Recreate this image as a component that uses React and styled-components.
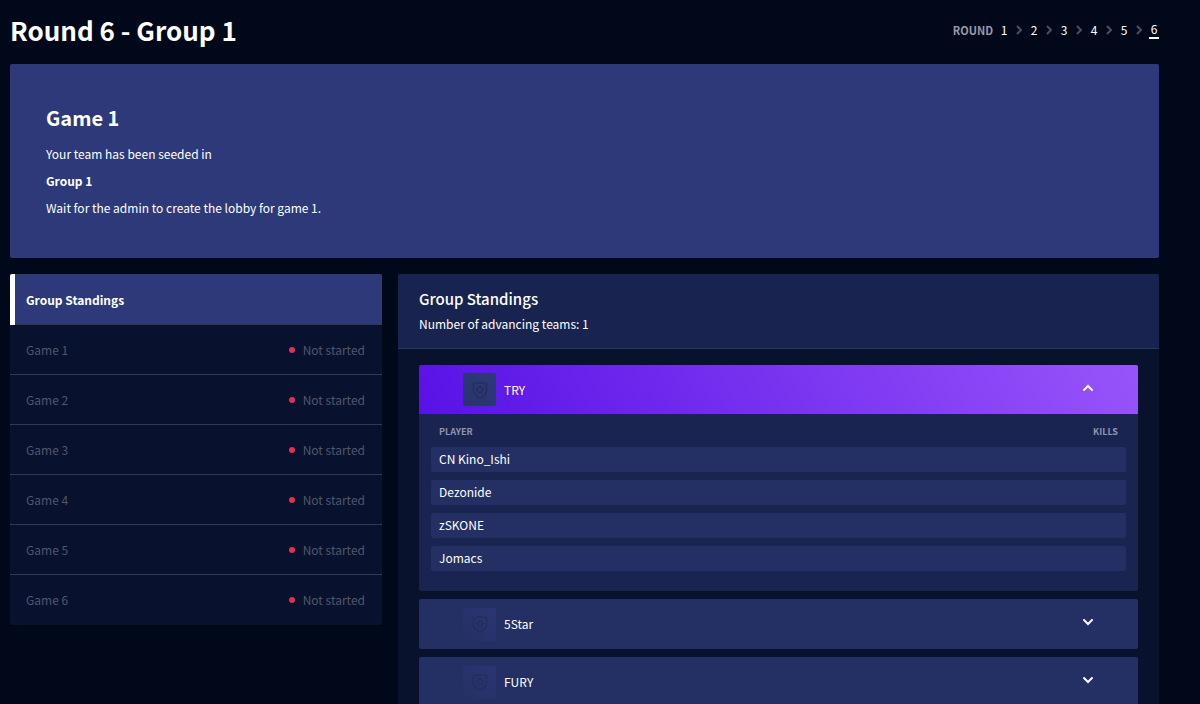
import React, { useState } from 'react'
import styled, { createGlobalStyle } from 'styled-components'


const GlobalStyle = createGlobalStyle`
    * {
        box-sizing: border-box;
    }
    html {
        scrollbar-width: none;
    }
    body {
        margin: 0;
        background: #000819;
        color: #fff;
        font-family: 'Noto Sans CJK SC', 'Noto Sans', sans-serif;
        font-size: 12px;
        line-height: 20px;
    }
    button {
        font: inherit;
        color: inherit;
        border: 0;
        cursor: pointer;
    }
`

const Page = styled.main`
    padding: 0 41px 16px 10px;
`

const Header = styled.header`
    display: flex;
    align-items: center;
    justify-content: space-between;
    height: 64px;
    padding-bottom: 4px;
`

const Title = styled.h1`
    margin: 0;
    font-size: 26px;
    font-weight: 700;
    line-height: 40px;
`

const Rounds = styled.nav`
    display: flex;
    align-items: center;
`

const RoundsLabel = styled.span`
    margin-right: 6px;
    font-size: 11px;
    font-weight: 700;
    color: #989ca8;
`

const RoundLink = styled.a`
    width: 10px;
    line-height: 16px;
    text-align: center;
    color: #fff;
    text-decoration: none;
    border-bottom: ${({ $current }) => ($current ? '2px solid #fff' : '0')};
`

const Separator = styled.svg`
    width: 8px;
    height: 10px;
    margin: 0 6px;
    fill: none;
    stroke: #4a5060;
    stroke-width: 2;
`

const Lobby = styled.section`
    min-height: 194px;
    padding: 36px;
    margin-bottom: 16px;
    background: #2d3978;
    border-radius: 2px;

    h2 {
        margin: 0 0 8px;
        font-size: 20px;
        font-weight: 700;
        line-height: 36px;
    }
    p {
        margin: 0 0 7px;
    }
    p:last-child {
        margin: 0;
    }
`

const Columns = styled.div`
    display: grid;
    grid-template-columns: 372fr 761fr;
    align-items: start;
    gap: 16px;
`

const Games = styled.nav`
    display: flex;
    flex-direction: column;
    background: #08112e;
    border-radius: 2px;
    overflow: hidden;
`

const GameTab = styled.button`
    display: flex;
    align-items: center;
    justify-content: space-between;
    height: 50px;
    padding: 0 17px 0 ${({ $active }) => ($active ? '11px' : '16px')};
    border-left: ${({ $active }) => ($active ? '5px solid #fff' : '0')};
    background: ${({ $active }) => ($active ? '#2d3978' : 'transparent')};
    color: ${({ $active }) => ($active ? '#fff' : '#50576c')};
    font-weight: ${({ $active }) => ($active ? 700 : 400)};
    box-shadow: inset 0 -1px 0 #303a58;

    &:first-child {
        height: 51px;
    }
    &:last-child {
        box-shadow: none;
    }
`

const Status = styled.span`
    display: flex;
    align-items: center;
    gap: 8px;

    &::before {
        content: '';
        width: 6px;
        height: 6px;
        border-radius: 50%;
        background: #e62e52;
    }
`

const Standings = styled.section`
    background: #08122d;
    border-radius: 2px;
    overflow: hidden;
`

const StandingsHeader = styled.div`
    height: 75px;
    padding: 13px 21px;
    background: #192350;
    border-bottom: 1px solid #2b3560;

    h2 {
        margin: 0;
        font-size: 15px;
        font-weight: 500;
        line-height: 24px;
    }
    p {
        margin: 3px 0 0;
    }
`

const TeamList = styled.div`
    display: flex;
    flex-direction: column;
    gap: 8px;
    padding: 16px 21px;
`

const Team = styled.div`
    background: #1a2450;
    border-radius: 2px;
    overflow: hidden;
`

const TeamButton = styled.button`
    display: flex;
    align-items: center;
    gap: 8px;
    width: 100%;
    height: ${({ $open }) => ($open ? '49px' : '50px')};
    padding: 0 44px;
    text-align: left;
    background: ${({ $open }) => ($open ? 'linear-gradient(60deg, #5812e6, #9854fa)' : '#242f64')};
`

const Logo = styled.span`
    display: grid;
    place-items: center;
    width: 33px;
    height: 33px;
    border-radius: 2px;
    background: ${({ $open }) =>
        $open ? 'linear-gradient(45deg, #28346a, #2d3a78)' : 'linear-gradient(45deg, #242f64, #2b3773)'};
`

const TeamName = styled.span`
    flex: 1;
`

const Arrow = styled.svg`
    width: 12px;
    height: 8px;
    margin-bottom: 4px;
    fill: none;
    stroke: #fff;
    stroke-width: 2;
    stroke-linecap: round;
    transform: ${({ $open }) => ($open ? 'rotate(180deg)' : 'none')};
`

const PlayersPanel = styled.div`
    padding: 0 12px 12px;
`

const Players = styled.table`
    width: 100%;
    border-collapse: separate;
    border-spacing: 0 8px;

    th {
        height: 17px;
        padding: 2px 8px 0;
        font-size: 9px;
        font-weight: 700;
        line-height: 15px;
        text-align: left;
        color: #9096ac;
    }
    th:last-child {
        text-align: right;
    }
    td {
        height: 25px;
        padding: 0 8px 2px;
        line-height: 23px;
        background: #242f64;
    }
    td:first-child {
        border-radius: 2px 0 0 2px;
    }
    td:last-child {
        border-radius: 0 2px 2px 0;
    }
`


const rounds = [1, 2, 3, 4, 5, 6]

const games = ['Game 1', 'Game 2', 'Game 3', 'Game 4', 'Game 5', 'Game 6']

const teams = [
    { name: 'TRY', players: ['CN Kino_Ishi', 'Dezonide', 'zSKONE', 'Jomacs'] },
    { name: '5Star', players: [] },
    { name: 'FURY', players: [] },
]


const Shield = () => (
    <svg width="16" height="18" viewBox="0 0 16 18" fill="none" stroke="#232e5e" strokeWidth="1.5" aria-hidden="true">
        <path d="M1.5 2.5h3L8 1.5l3.5 1h3V10c0 3.200-2.500 5.300-6.500 7-4-1.700-6.500-3.800-6.500-7z" />
        <path d="M8 5.500l3 2.200-1.100 3.500H6.100L5 7.700z" />
    </svg>
)

const TeamRow = ({ team, open, onToggle }) => (
    <Team>
        <TeamButton type="button" $open={open} aria-expanded={open} onClick={onToggle}>
            <Logo $open={open}><Shield /></Logo>
            <TeamName>{team.name}</TeamName>
            <Arrow $open={open} viewBox="0 0 12 8" aria-hidden="true">
                <path d="M2 2l4 4 4-4" />
            </Arrow>
        </TeamButton>
        {open && (
            <PlayersPanel>
                <Players>
                    <thead>
                        <tr><th scope="col">PLAYER</th><th scope="col">KILLS</th></tr>
                    </thead>
                    <tbody>
                        {team.players.map((player) => (
                            <tr key={player}><td>{player}</td><td></td></tr>
                        ))}
                    </tbody>
                </Players>
            </PlayersPanel>
        )}
    </Team>
)

const App = () => {
    const [tab, setTab] = useState('Group Standings')
    const [openTeam, setOpenTeam] = useState('TRY')

    return (
        <>
            <GlobalStyle />
            <Page>
                <Header>
                    <Title>Round 6 - Group 1</Title>
                    <Rounds aria-label="Rounds">
                        <RoundsLabel>ROUND</RoundsLabel>
                        {rounds.map((round) => (
                            <React.Fragment key={round}>
                                {round > 1 && (
                                    <Separator viewBox="0 0 8 10" aria-hidden="true">
                                        <path d="M2 1l4 4-4 4" />
                                    </Separator>
                                )}
                                <RoundLink href={`#round-${round}`} $current={round === 6}>{round}</RoundLink>
                            </React.Fragment>
                        ))}
                    </Rounds>
                </Header>
                <Lobby>
                    <h2>Game 1</h2>
                    <p>Your team has been seeded in</p>
                    <p><strong>Group 1</strong></p>
                    <p>Wait for the admin to create the lobby for game 1.</p>
                </Lobby>
                <Columns>
                    <Games aria-label="Games">
                        <GameTab type="button" $active={tab === 'Group Standings'} onClick={() => setTab('Group Standings')}>
                            Group Standings
                        </GameTab>
                        {games.map((game) => (
                            <GameTab type="button" key={game} $active={tab === game} onClick={() => setTab(game)}>
                                {game}
                                <Status>Not started</Status>
                            </GameTab>
                        ))}
                    </Games>
                    <Standings>
                        <StandingsHeader>
                            <h2>Group Standings</h2>
                            <p>Number of advancing teams: 1</p>
                        </StandingsHeader>
                        <TeamList>
                            {teams.map((team) => (
                                <TeamRow
                                    key={team.name}
                                    team={team}
                                    open={openTeam === team.name}
                                    onToggle={() => setOpenTeam(openTeam === team.name ? '' : team.name)}
                                />
                            ))}
                        </TeamList>
                    </Standings>
                </Columns>
            </Page>
        </>
    )
}

export default App
